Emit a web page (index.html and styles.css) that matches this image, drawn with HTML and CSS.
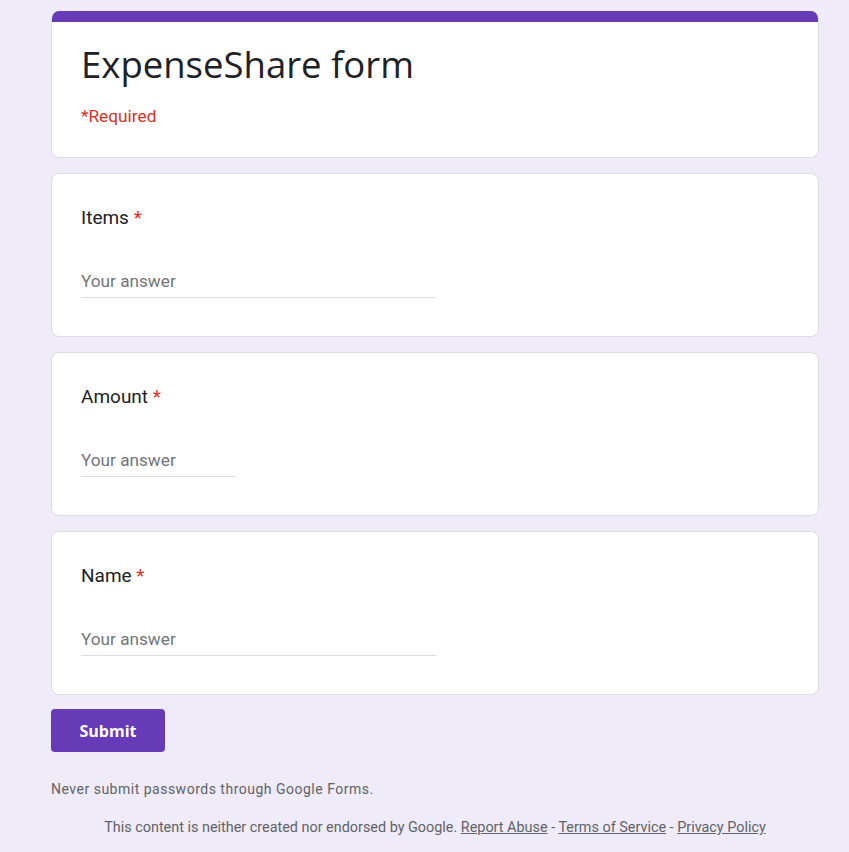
FILE: index.html
```html
<!DOCTYPE html>
<html lang="en">
<head>
<meta charset="utf-8">
<title>ExpenseShare form</title>
<link rel="stylesheet" href="styles.css">
</head>
<body>
<main class="page">
  <section class="card header-card">
    <div class="header-bar"></div>
    <div class="header-body">
      <h1 class="title">ExpenseShare form</h1>
      <div class="required-note">*Required</div>
    </div>
  </section>

  <section class="card question">
    <div class="q-label">Items <span class="star">*</span></div>
    <div class="answer answer-wide"><span class="placeholder">Your answer</span></div>
  </section>

  <section class="card question">
    <div class="q-label">Amount <span class="star">*</span></div>
    <div class="answer answer-narrow"><span class="placeholder">Your answer</span></div>
  </section>

  <section class="card question">
    <div class="q-label">Name <span class="star">*</span></div>
    <div class="answer answer-wide"><span class="placeholder">Your answer</span></div>
  </section>

  <div class="actions">
    <button class="submit" type="button">Submit</button>
  </div>

  <p class="warning">Never submit passwords through Google Forms.</p>

  <p class="footer">This content is neither created nor endorsed by Google. <a href="#">Report Abuse</a> - <a href="#">Terms of Service</a> - <a href="#">Privacy Policy</a></p>
</main>
</body>
</html>
```

FILE: styles.css
```css
html, body {
  margin: 0;
  padding: 0;
  background: #f0ebf8;
}
body {
  font-family: Roboto, "Liberation Sans", Arial, sans-serif;
  color: #202124;
}
.page {
  width: 768px;
  margin-left: 51px;
  padding-top: 11px;
  display: flex;
  flex-direction: column;
  gap: 15px;
}
.card {
  background: #fff;
  border: 1px solid #dadce0;
  border-radius: 8px;
  box-sizing: border-box;
}
.header-card {
  border-top: none;
  overflow: hidden;
  height: 147px;
}
.header-bar {
  height: 11px;
  background: #673ab7;
}
.header-body {
  padding: 22px 29px 0 29px;
}
.title {
  margin: 0;
  font-family: "Open Sans", Roboto, sans-serif;
  font-weight: 400;
  font-size: 36.5px;
  line-height: 40px;
  color: #202124;
  letter-spacing: 0;
}
.required-note {
  margin-top: 22px;
  font-size: 17.3px;
  line-height: 20px;
  color: #d93025;
}
.question {
  height: 164px;
  padding: 32px 29px 0 29px;
}
.q-label {
  font-size: 19px;
  line-height: 24px;
  color: #202124;
}
.star {
  color: #d93025;
}
.answer {
  margin-top: 36px;
  height: 32px;
  box-sizing: border-box;
  padding-top: 5px;
  border-bottom: 1px solid #dadce0;
}
.answer-wide { width: 355px; }
.answer-narrow { width: 154px; }
.placeholder {
  font-size: 17.2px;
  line-height: 20px;
  color: #70757a;
}
.actions {
  margin-top: -1px;
  display: flex;
}
.submit {
  width: 114px;
  height: 43px;
  background: #673ab7;
  color: #fff;
  border: none;
  border-radius: 4px;
  font-family: "Open Sans", Roboto, sans-serif;
  font-weight: 700;
  font-size: 16px;
  padding: 0;
}
.warning {
  margin: 12px 0 0 0;
  font-size: 14px;
  line-height: 20px;
  letter-spacing: 0.5px;
  color: #5f6368;
}
.footer {
  margin: 4px 0 0 0;
  text-align: center;
  font-size: 14.4px;
  line-height: 20px;
  color: #5f6368;
}
.footer a {
  color: #5f6368;
  text-decoration: underline;
}
```
